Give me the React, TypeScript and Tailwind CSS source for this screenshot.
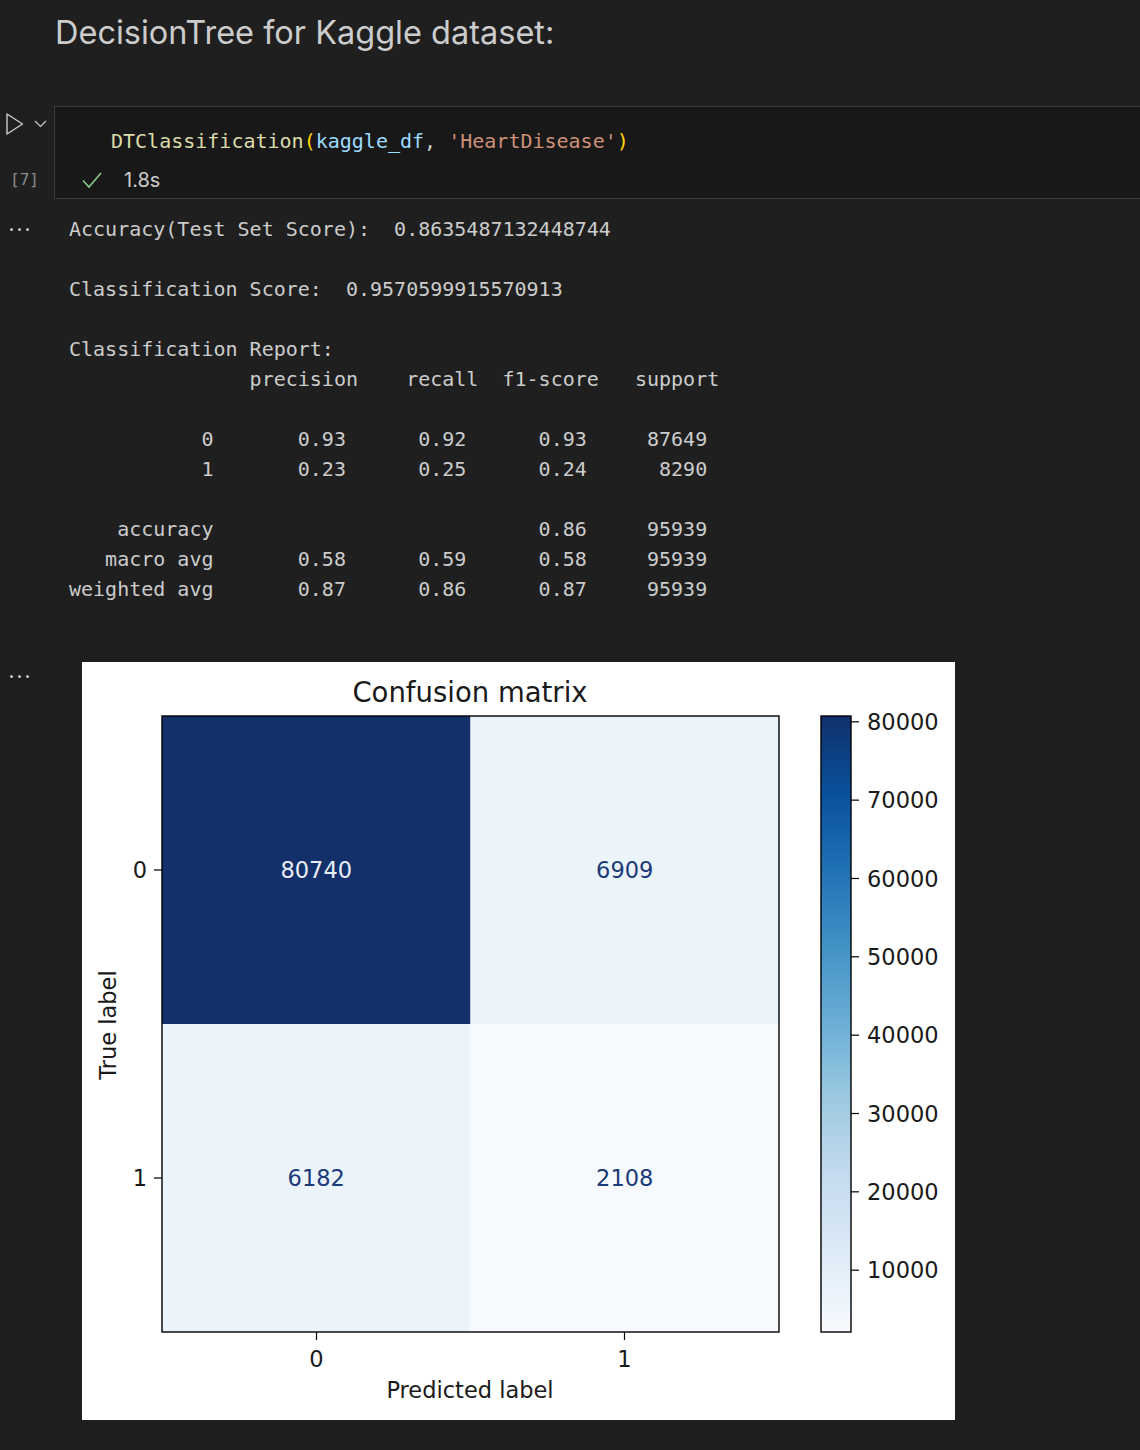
import React from "react";

const mono = "font-['DejaVu_Sans_Mono','Liberation_Mono',monospace]";

const report = [
  "Accuracy(Test Set Score):  0.8635487132448744",
  "",
  "Classification Score:  0.9570599915570913",
  "",
  "Classification Report:",
  " ".repeat(15) + "precision    recall  f1-score   support",
  "",
  "           0       0.93      0.92      0.93     87649",
  "           1       0.23      0.25      0.24      8290",
  "",
  "    accuracy" + " ".repeat(27) + "0.86     95939",
  "   macro avg       0.58      0.59      0.58     95939",
  "weighted avg       0.87      0.86      0.87     95939",
];

function Dots() {
  return (
    <div className="flex items-center gap-[5px] pl-[10px]">
      <div className="h-[3px] w-[3px] rounded-full bg-[#c8c8c8]" />
      <div className="h-[3px] w-[3px] rounded-full bg-[#c8c8c8]" />
      <div className="h-[3px] w-[3px] rounded-full bg-[#c8c8c8]" />
    </div>
  );
}

// colorbar ticks: value -> y inside the figure
const vmin = 2108;
const vmax = 80740;
const axTop = 54;
const axBottom = 670;
const tickY = (v: number) => axTop + ((vmax - v) / (vmax - vmin)) * (axBottom - axTop);

function ConfusionMatrix() {
  const font = "'DejaVu Sans', 'Liberation Sans', sans-serif";
  const cells = [
    { x: 80, y: 54, fill: "#14306a", text: "80740", color: "#e8edf5" },
    { x: 388.5, y: 54, fill: "#ebf3fb", text: "6909", color: "#1b3a78" },
    { x: 80, y: 362, fill: "#ebf3fb", text: "6182", color: "#1b3a78" },
    { x: 388.5, y: 362, fill: "#f6faff", text: "2108", color: "#1b3a78" },
  ];
  const cbTicks = [80000, 70000, 60000, 50000, 40000, 30000, 20000, 10000];
  return (
    <svg width="873" height="758" viewBox="0 0 873 758" fontFamily={font}>
      <defs>
        <linearGradient id="blues" x1="0" y1="0" x2="0" y2="1">
          <stop offset="0" stopColor="#11306a" />
          <stop offset="0.125" stopColor="#08519c" />
          <stop offset="0.25" stopColor="#2171b5" />
          <stop offset="0.375" stopColor="#4292c6" />
          <stop offset="0.5" stopColor="#6baed6" />
          <stop offset="0.625" stopColor="#9ecae1" />
          <stop offset="0.75" stopColor="#c6dbef" />
          <stop offset="0.875" stopColor="#deebf7" />
          <stop offset="1" stopColor="#f7fbff" />
        </linearGradient>
      </defs>
      <rect width="873" height="758" fill="#ffffff" />
      <text x="388" y="40" fontSize="27.5" textAnchor="middle" fill="#1a1a1a">
        Confusion matrix
      </text>

      {cells.map((c) => (
        <g key={c.text}>
          <rect x={c.x} y={c.y} width="308.5" height="308" fill={c.fill} />
          <text
            x={c.x + 154.25}
            y={c.y + 162}
            fontSize="22.5"
            textAnchor="middle"
            fill={c.color}
          >
            {c.text}
          </text>
        </g>
      ))}
      <rect x="80" y="54" width="617" height="616" fill="none" stroke="#000" strokeWidth="1.4" />

      {/* y ticks */}
      <line x1="72" y1="208" x2="80" y2="208" stroke="#000" strokeWidth="1.2" />
      <line x1="72" y1="516" x2="80" y2="516" stroke="#000" strokeWidth="1.2" />
      <text x="65" y="216" fontSize="22.5" textAnchor="end" fill="#1a1a1a">0</text>
      <text x="65" y="524" fontSize="22.5" textAnchor="end" fill="#1a1a1a">1</text>

      {/* x ticks */}
      <line x1="234.5" y1="670" x2="234.5" y2="678" stroke="#000" strokeWidth="1.2" />
      <line x1="542.5" y1="670" x2="542.5" y2="678" stroke="#000" strokeWidth="1.2" />
      <text x="234.5" y="705" fontSize="22.5" textAnchor="middle" fill="#1a1a1a">0</text>
      <text x="542.5" y="705" fontSize="22.5" textAnchor="middle" fill="#1a1a1a">1</text>

      <text x="388" y="736" fontSize="22.5" textAnchor="middle" fill="#1a1a1a">
        Predicted label
      </text>
      <text
        x="34"
        y="363"
        fontSize="22.5"
        textAnchor="middle"
        fill="#1a1a1a"
        transform="rotate(-90 34 363)"
      >
        True label
      </text>

      {/* colorbar */}
      <rect x="739" y="54" width="30" height="616" fill="url(#blues)" stroke="#000" strokeWidth="1.4" />
      {cbTicks.map((v) => {
        const y = tickY(v);
        return (
          <g key={v}>
            <line x1="769" y1={y} x2="777" y2={y} stroke="#000" strokeWidth="1.2" />
            <text x="785" y={y + 8.2} fontSize="22.5" fill="#1a1a1a">
              {v}
            </text>
          </g>
        );
      })}
    </svg>
  );
}

export default function App() {
  return (
    <div className="min-h-[1450px] w-full overflow-hidden bg-[#1f1f1f] text-[#cccccc]">
      {/* markdown cell */}
      <div className="h-[106px] pl-[55px] pt-[14px]">
        <h1 className="font-['Inter','Noto_Sans',sans-serif] text-[32.5px] leading-[38px] text-[#cccccc]">
          DecisionTree for Kaggle dataset:
        </h1>
      </div>

      {/* code cell */}
      <div className="flex h-[93px]">
        <div className="w-[54px] shrink-0">
          <div className="flex items-center pl-[6px] pt-[7px]">
            <svg width="18" height="22" viewBox="0 0 18 22" fill="none">
              <path d="M1 1 L16.5 11 L1 21 Z" stroke="#cccccc" strokeWidth="1.4" strokeLinejoin="round" />
            </svg>
            <svg className="ml-[10px]" width="13" height="8" viewBox="0 0 13 8" fill="none">
              <path d="M1 1 L6.5 6.5 L12 1" stroke="#cccccc" strokeWidth="1.2" />
            </svg>
          </div>
          <div className={`${mono} mt-[35px] pl-[10px] text-[16px] leading-[20px] text-[#8b8b8b]`}>
            [7]
          </div>
        </div>
        <div className="flex-1 border-y border-l border-[#3a3a3a] bg-[#181818] pl-[56px] pt-[19px]">
          <div className={`${mono} whitespace-pre text-[20px] leading-[30px]`}>
            <span className="text-[#dcdcaa]">DTClassification</span>
            <span className="text-[#ffd700]">(</span>
            <span className="text-[#9cdcfe]">kaggle_df</span>
            <span className="text-[#cccccc]">, </span>
            <span className="text-[#ce9178]">'HeartDisease'</span>
            <span className="text-[#ffd700]">)</span>
          </div>
          <div className="-ml-[29px] mt-[12px] flex h-[24px] items-center">
            <svg width="20" height="17" viewBox="0 0 20 17" fill="none">
              <path d="M1 8.5 L7 15 L19 1" stroke="#89d185" strokeWidth="1.5" />
            </svg>
            <span className="ml-[22px] font-['Inter','Noto_Sans',sans-serif] text-[20px] leading-[24px] text-[#cccccc]">
              1.8s
            </span>
          </div>
        </div>
      </div>

      {/* text output */}
      <div className="flex pt-[15px]">
        <div className="w-[54px] shrink-0 pt-[14px]">
          <Dots />
        </div>
        <pre className={`${mono} pl-[15px] text-[20px] leading-[30px] text-[#cccccc]`}>
          {report.join("\n")}
        </pre>
      </div>

      {/* figure output */}
      <div className="mt-[58px] flex">
        <div className="w-[54px] shrink-0 pt-[13px]">
          <Dots />
        </div>
        <div className="ml-[28px] h-[758px] w-[873px] bg-white">
          <ConfusionMatrix />
        </div>
      </div>
    </div>
  );
}
